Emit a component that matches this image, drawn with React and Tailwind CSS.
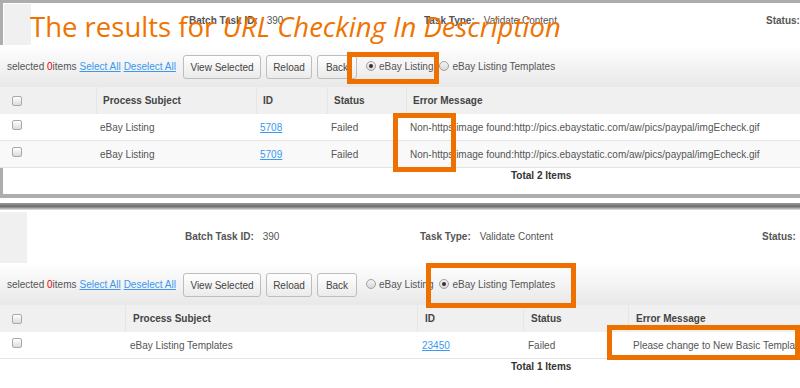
import React from 'react';

const ORANGE = 'border-[#ee7100]';

const Checkbox = () => (
    <span className="block w-[10px] h-[10px] rounded-[2px] border border-[#a9a9a9] bg-gradient-to-b from-white to-[#dcdcdc]" />
);

const Radio = ({ checked }) => (
    <span className="flex items-center justify-center w-[10px] h-[10px] rounded-full border border-[#a0a0a0] bg-gradient-to-b from-[#f4f4f4] to-[#d8d8d8]">
        {checked && <span className="block w-[4px] h-[4px] rounded-full bg-[#333]" />}
    </span>
);

const Button = ({ children, w }) => (
    <div className={`${w} h-[24px] flex items-center justify-center rounded-[3px] border border-[#bdbdbd] bg-gradient-to-b from-white to-[#ebebeb] text-[10px] text-[#444]`}>
        {children}
    </div>
);

// header line with batch id / task type / status
const InfoRow = ({ height, blockTop, textPad }) => (
    <div className={`${height} flex`}>
        <div className={`w-[27px] ${blockTop} bg-[#f0f0f0]`} />
        <div className={`flex items-center pl-[158px] ${textPad} text-[10px] text-[#555]`}>
            <div className="w-[235px] flex gap-[9px]">
                <span className="font-bold">Batch Task ID:</span>
                <span>390</span>
            </div>
            <div className="w-[342px] flex gap-[9px]">
                <span className="font-bold">Task Type:</span>
                <span>Validate Content</span>
            </div>
            <span className="font-bold">Status:</span>
        </div>
    </div>
);

const Toolbar = ({ templates }) => (
    <div className="h-[42px] flex items-center bg-gradient-to-b from-white to-[#e8e8e8] text-[10px] text-[#555]">
        <div className="w-[183px] flex items-center pl-[7px]">
            <span>selected <span className="text-[#e60000]">0</span>items</span>
            <span className="ml-[3px] text-[#3a98f0] underline">Select All</span>
            <span className="ml-[3px] text-[#3a98f0] underline">Deselect All</span>
        </div>
        <div className="flex gap-[5px] mt-[2px]">
            <Button w="w-[78px]">View Selected</Button>
            <Button w="w-[46px]">Reload</Button>
            <Button w="w-[40px]">Back</Button>
        </div>
        <div className="flex items-center ml-[9px] gap-[3px]">
            <Radio checked={!templates} />
            <span>eBay Listing</span>
        </div>
        <div className="flex items-center ml-[6px] gap-[3px]">
            <Radio checked={templates} />
            <span>eBay Listing Templates</span>
        </div>
    </div>
);

const Table = ({ cols, rows, headPad, rowPad, rowH }) => (
    <div className="text-[10px]">
        <div className={`grid ${cols} h-[27px] bg-[#f0f0f0] font-bold text-[#444]`}>
            <div className="pl-[12px] pt-[9px]"><Checkbox /></div>
            {['Process Subject', 'ID', 'Status', 'Error Message'].map((h) => (
                <div key={h} className={`flex items-center ${headPad} border-l border-[#e6e6e6]`}>{h}</div>
            ))}
        </div>
        {rows.map((r, i) => (
            <div key={i} className={`grid ${cols} ${rowH} border-b border-[#e4e4e4] ${i % 2 ? 'bg-[#f9f9f9]' : 'bg-white'} text-[#555]`}>
                <div className="pl-[12px] pt-[6px]"><Checkbox /></div>
                <div className={`flex items-center ${rowPad}`}>{r.subject}</div>
                <div className={`flex items-center ${rowPad}`}>
                    <span className="text-[#3a98f0] underline">{r.id}</span>
                </div>
                <div className={`flex items-center ${rowPad}`}>Failed</div>
                <div className={`flex items-center ${rowPad} whitespace-nowrap overflow-hidden`}>{r.msg}</div>
            </div>
        ))}
    </div>
);

const Box = ({ cls }) => (
    <div className={`absolute border-[5px] ${ORANGE} ${cls}`} />
);

const imgMsg = 'Non-https image found:http://pics.ebaystatic.com/aw/pics/paypal/imgEcheck.gif';

export default function App() {
    return (
        <div className="relative w-[800px] h-[388px] overflow-hidden bg-white font-['Liberation_Sans',Arial,sans-serif]">
            {/* first screenshot */}
            <div className="h-[198px] border-t-[3px] border-b-[4px] border-[#adadad] shadow-[inset_3px_0_0_#adadad]">
                <InfoRow height="h-[42px]" blockTop="ml-[4px] w-[23px] mt-[1px]" textPad="pb-[8px]" />
                <Toolbar templates={false} />
                <Table
                    cols="grid-cols-[96px_160px_71px_79px_1fr]"
                    headPad="pl-[6px]"
                    rowPad="pl-[4px]"
                    rowH="h-[27px]"
                    rows={[
                        { subject: 'eBay Listing', id: '5708', msg: imgMsg },
                        { subject: 'eBay Listing', id: '5709', msg: imgMsg },
                    ]}
                />
                <div className="pl-[511px] text-[10px] font-bold text-[#333]">Total 2 Items</div>
            </div>
            <div className="h-[5px]" />
            <div className="h-[7px] bg-gradient-to-b from-[#9a9a9a] via-[#6e6e6e] to-[#e8e8e8]" />

            {/* second screenshot */}
            <InfoRow height="h-[53px]" blockTop="mt-[2px]" textPad="" />
            <Toolbar templates={true} />
            <Table
                cols="grid-cols-[125px_292px_106px_105px_1fr]"
                headPad="pl-[7px]"
                rowPad="pl-[5px]"
                rowH="h-[27px]"
                rows={[
                    { subject: 'eBay Listing Templates', id: '23450', msg: 'Please change to New Basic Templates' },
                ]}
            />
            <div className="pl-[511px] text-[10px] font-bold text-[#333]">Total 1 Items</div>

            {/* annotation */}
            <div className="absolute left-[30px] top-[13px] leading-none text-[27.5px] text-[#ef7300] font-['Open_Sans',sans-serif] whitespace-nowrap">
                The results for <span className="italic">URL Checking In Description</span>
            </div>
            <Box cls="left-[347px] top-[52px] w-[92px] h-[32px]" />
            <Box cls="left-[393px] top-[113px] w-[63px] h-[59px]" />
            <Box cls="left-[426px] top-[263px] w-[150px] h-[45px]" />
            <Box cls="left-[607px] top-[325px] w-[193px] h-[35px]" />
        </div>
    );
}
